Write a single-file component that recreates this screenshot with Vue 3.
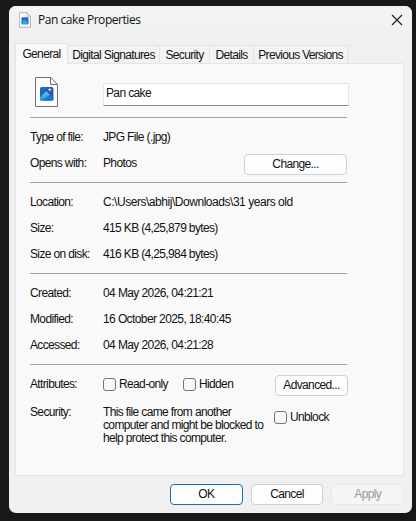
<script setup>
import { ref } from 'vue'

const tabs = [
  { name: 'General', key: 'general' },
  { name: 'Digital Signatures', key: 'signatures' },
  { name: 'Security', key: 'security' },
  { name: 'Details', key: 'details' },
  { name: 'Previous Versions', key: 'versions' },
]
const active = ref('general')
const fileName = ref('Pan cake')
const sizes = [
  { label: 'Location:', value: 'C:\\Users\\abhij\\Downloads\\31 years old', key: 'location' },
  { label: 'Size:', value: '415 KB (4,25,879 bytes)', key: 'size' },
  { label: 'Size on disk:', value: '416 KB (4,25,984 bytes)', key: 'disk' },
]
const dates = [
  { label: 'Created:', value: '04 May 2026, 04:21:21', key: 'created' },
  { label: 'Modified:', value: '16 October 2025, 18:40:45', key: 'modified' },
  { label: 'Accessed:', value: '04 May 2026, 04:21:28', key: 'accessed' },
]
</script>

<template>
  <div class="desktop">
    <section class="window">
      <header class="titlebar">
        <svg class="title-icon" viewBox="0 0 24 31">
          <path d="M.8.8H16L23 8V30H.8Z" fill="#fcfcfc" stroke="#a0a0a0" stroke-width="1.5" />
          <path d="M16 1V8H23" fill="none" stroke="#a0a0a0" stroke-width="1.5" />
          <rect x="5" y="10" width="14" height="14" rx="1.5" fill="#2768bd" />
          <path d="M5 20L11 14L19 22V24H5Z" fill="#28a5ed" />
        </svg>
        <h1>Pan cake Properties</h1>
        <button class="close" aria-label="Close">
          <svg viewBox="0 0 12 12"><path d="M1 1L11 11M11 1L1 11" stroke="#222" stroke-width="1.15" /></svg>
        </button>
      </header>

      <nav class="tabs">
        <button v-for="tab in tabs" :key="tab.key" :class="['tab', tab.key, { active: active === tab.key }]" @click="active = tab.key">
          <span>{{ tab.name }}</span>
        </button>
      </nav>

      <main class="panel">
        <div class="identity">
          <svg class="file-icon" viewBox="0 0 24 31">
            <defs>
              <linearGradient id="sky" x1="0" y1="0" x2="1" y2="1">
                <stop offset="0" stop-color="#1d6dc5" /><stop offset="1" stop-color="#434197" />
              </linearGradient>
              <linearGradient id="hill" x1="0" y1="0" x2="0" y2="1">
                <stop offset="0" stop-color="#58d0fb" /><stop offset="1" stop-color="#168be0" />
              </linearGradient>
            </defs>
            <path d="M.5.5H15.8L22.5 7.5V29.5H.5Z" fill="#fcfcfc" stroke="#707070" stroke-width="1" />
            <path d="M15.5.8V7.5H22.5" fill="none" stroke="#707070" stroke-width="1" />
            <rect x="5" y="10" width="13.4" height="13.4" rx="1.5" fill="url(#sky)" />
            <path d="M5 20.3L10.4 15Q11.2 14.2 12 15L18.4 21V22Q18.4 23.4 17 23.4H6.5Q5 23.4 5 22Z" fill="url(#hill)" />
            <path d="M8 23.4L14.2 18.2Q15 17.6 15.8 18.3L18.4 20.6V22Q18.4 23.4 17 23.4Z" fill="#1878d2" />
            <path d="M14.8 10.7L15.4 12.1L16.8 12.7L15.4 13.3L14.8 14.7L14.2 13.3L12.8 12.7L14.2 12.1Z" fill="#cceaff" />
          </svg>
          <input v-model="fileName" aria-label="File name">
        </div>
        <hr>
        <dl class="types">
          <dt class="type-label">Type of file:</dt><dd class="type">JPG File (.jpg)</dd>
          <dt class="opens-label">Opens with:</dt>
          <dd class="opens">Photos<button class="change">Change...</button></dd>
        </dl>
        <hr>
        <dl>
          <template v-for="row in sizes" :key="row.key">
            <dt :class="row.key + '-label'">{{ row.label }}</dt><dd :class="row.key">{{ row.value }}</dd>
          </template>
        </dl>
        <hr>
        <dl>
          <template v-for="row in dates" :key="row.key">
            <dt :class="row.key + '-label'">{{ row.label }}</dt><dd :class="row.key">{{ row.value }}</dd>
          </template>
        </dl>
        <hr>
        <div class="attributes">
          <span class="attributes-label">Attributes:</span>
          <label class="read"><input type="checkbox"><span>Read-only</span></label>
          <label class="hidden"><input type="checkbox"><span>Hidden</span></label>
          <button class="advanced">Advanced...</button>
        </div>
        <div class="protection">
          <span class="protection-label">Security:</span>
          <p><span class="line1">This file came from another</span><br><span class="line2">computer and might be blocked to</span><br><span class="line3">help protect this computer.</span></p>
          <label class="unblock"><input type="checkbox"><span>Unblock</span></label>
        </div>
      </main>

      <footer>
        <button class="ok">OK</button>
        <button class="cancel">Cancel</button>
        <button class="apply" disabled>Apply</button>
      </footer>
    </section>
  </div>
</template>

<style>
body { margin: 0; background: #181818; }
</style>
<style scoped>
* { box-sizing: border-box; }
.desktop { width: 416px; height: 521px; padding: 6px 4px 8px 9px; background: #181818; color: #111; font: 12px/13px "Liberation Sans", sans-serif; letter-spacing: -0.64px; }
.window { height: 507px; border-radius: 7px; overflow: hidden; background: #f0f0f0; }
button, input { font: inherit; color: inherit; letter-spacing: inherit; }
button { padding: 0; border: 1px solid #d0d0d0; border-radius: 4px; background: #fdfdfd; }
.titlebar { height: 37px; display: flex; padding: 6px 8px 0 10px; background: linear-gradient(#f3f3f3, #f0f0f0); }
.title-icon { width: 12px; height: 16px; }
h1 { margin: 1px 0 0 7px; font: 12px/14px "Open Sans", sans-serif; letter-spacing: -0.45px; }
.close { width: 14px; height: 14px; margin: 1px 0 0 auto; border: 0; background: none; display: grid; place-items: center; }
.close svg { width: 12px; height: 12px; }
.tabs { height: 20px; display: flex; align-items: flex-end; padding-left: 6px; }
.tab { height: 18px; border: 1px solid #e3e3e3; border-width: 1px 1px 0 0; border-radius: 0; background: #f3f3f3; white-space: nowrap; }
.tab span { position: relative; top: 1px; }
.tab.active { height: 21px; margin-bottom: -1px; background: #f9f9f9; border-left-width: 1px; z-index: 1; }
.tab.active span { top: 0; }
.general { width: 53px; }
.signatures { width: 92px; }
.security { width: 50px; }
.details { width: 44px; }
.versions { width: 94px; letter-spacing: -0.68px; }
.panel { width: 389px; height: 413px; margin-left: 6px; padding: 13px 56px 0 14px; background: #f9f9f9; border: 1px solid #e5e5e5; }
.identity { height: 40px; display: flex; }
.file-icon { width: 24px; height: 31px; margin-left: 5px; }
.identity input { width: 246px; height: 23px; margin: 6px -2px 0 44px; padding: 0 3px 3px 2px; border: 1px solid #e5e5e5; border-bottom-color: #858585; background: #fff; outline: 0; flex: none; }
hr { height: 1px; margin: 0; border: 0; background: #a1a1a1; }
dl { height: 90px; margin: 0; padding-top: 6px; display: grid; grid-template-columns: 73px 1fr; grid-auto-rows: 26px; line-height: 26px; white-space: nowrap; }
dl.types { height: 64px; }
dd { margin: 0; }
.location { letter-spacing: -0.46px; }
.created, .modified, .accessed { letter-spacing: -0.6px; }
.opens { display: flex; justify-content: space-between; }
.change { width: 103px; height: 21px; margin-top: 4px; line-height: 19px; }
.attributes { height: 34px; display: flex; padding-top: 13px; white-space: nowrap; }
.attributes-label { width: 73px; flex: none; }
label { display: flex; height: 13px; gap: 3px; white-space: nowrap; }
.attributes label { flex: none; }
input[type=checkbox] { appearance: none; width: 13px; height: 13px; flex: none; margin: 0; border: 1px solid #767676; border-radius: 3px; background: #f8f8f8; }
.read { width: 80px; }
.hidden { width: 92px; }
.advanced { width: 73px; height: 21px; margin-top: -3px; flex: none; }
.protection { display: flex; padding-top: 7px; white-space: nowrap; }
.protection-label { width: 73px; }
p { width: 171px; margin: 0; }
.unblock { margin-top: 5px; }
footer { display: flex; gap: 8px; padding: 8px 8px 0 161px; }
footer button { width: 73px; height: 21px; }
.ok { border-color: #1272b6; }
.apply { border-color: #e9e9e9; background: #f5f5f5; color: #999; }
</style>
